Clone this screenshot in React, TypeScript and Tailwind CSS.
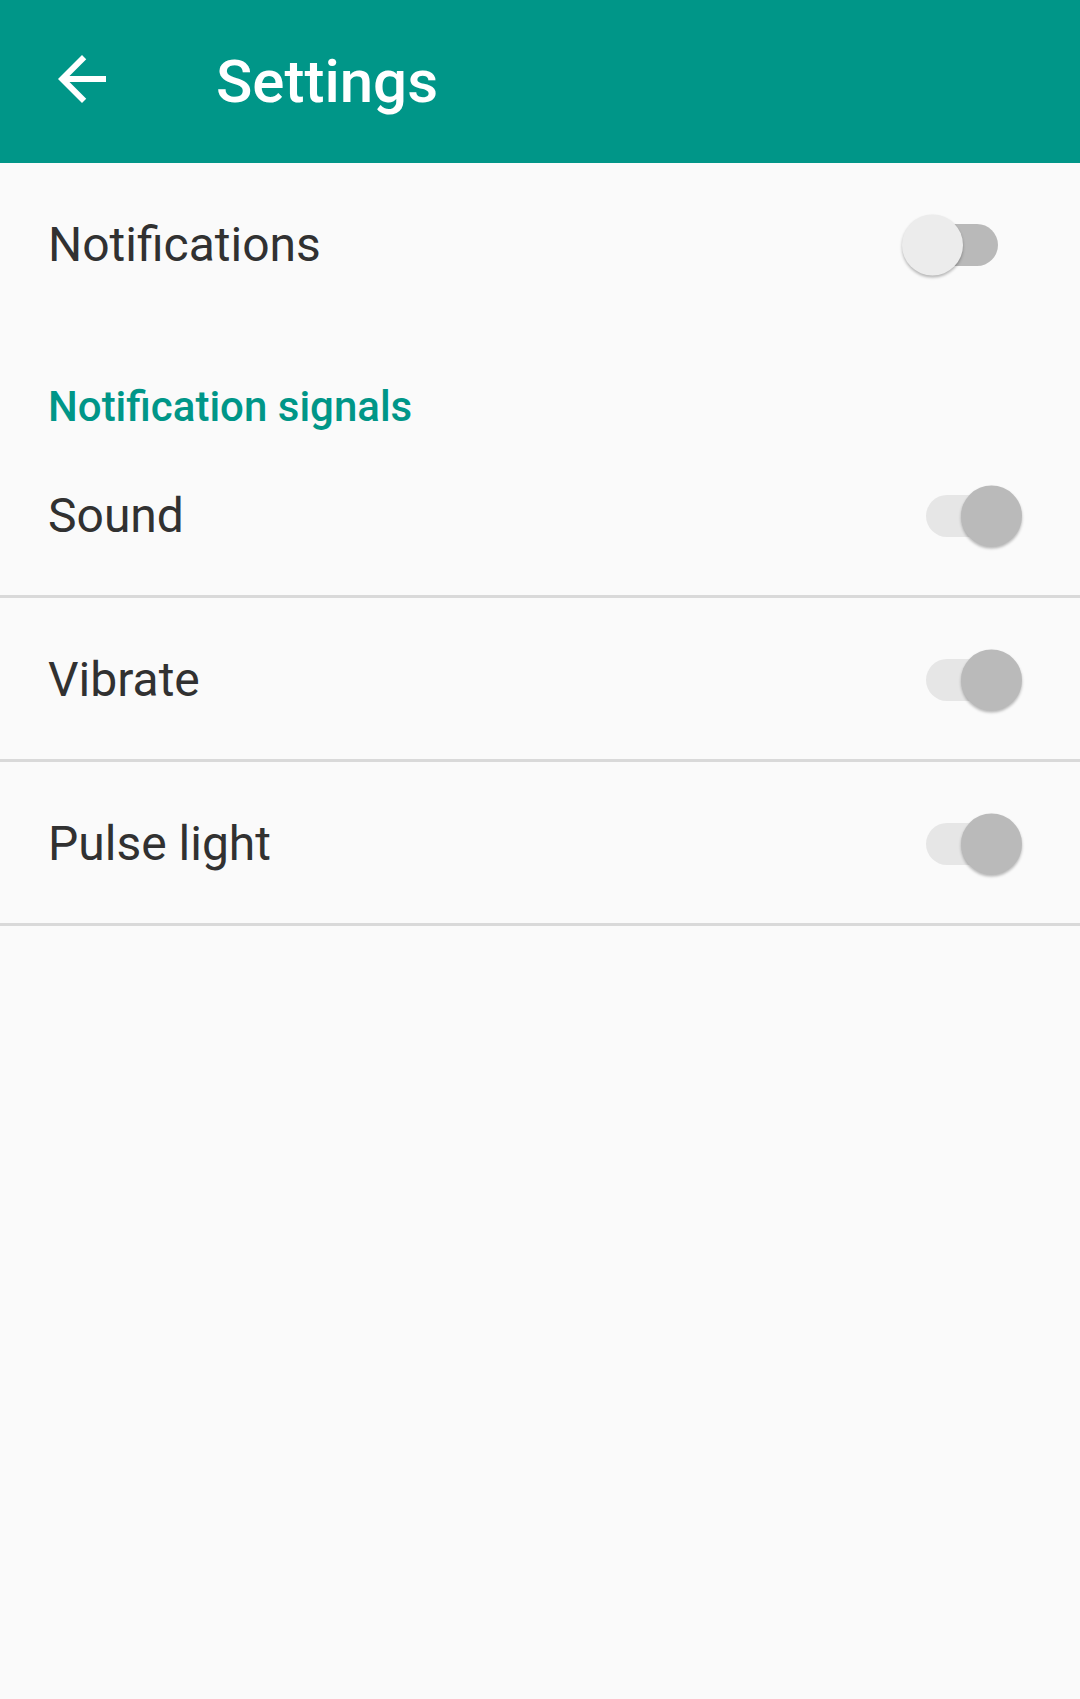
import { useState } from "react";

type Pref = { key: string; label: string; on: boolean };

const signals: Pref[] = [
  { key: "sound", label: "Sound", on: true },
  { key: "vibrate", label: "Vibrate", on: true },
  { key: "pulse", label: "Pulse light", on: true },
];

function Toggle({ on, disabled }: { on: boolean; disabled?: boolean }) {
  // disabled switches are greyed out, checked or not
  const track = disabled ? "bg-[#e6e6e6]" : on ? "bg-[#80cbc4]" : "bg-[#b9b9b9]";
  const thumb = disabled
    ? on
      ? "bg-[#bababa]"
      : "bg-[#ececec]"
    : on
      ? "bg-[#009688]"
      : "bg-[#ececec]";

  return (
    <div className="relative w-[72px] h-[42px] mr-[82px]">
      <div className={`w-full h-full rounded-full ${track}`} />
      <div
        className={`absolute top-1/2 -translate-y-1/2 w-[61px] h-[61px] rounded-full shadow-[0_2px_3px_rgba(0,0,0,0.28)] ${thumb} ${
          on ? "left-[35px]" : "-left-[24px]"
        }`}
      />
    </div>
  );
}

export default function App() {
  const [notify] = useState(false);

  return (
    <div className="min-h-screen bg-[#fafafa] font-['Roboto',sans-serif]">
      <header className="h-[163px] bg-[#009688] flex items-center text-white">
        <button aria-label="Back" className="self-start mt-[43px] ml-[46px] w-[72px] h-[72px]">
          <svg viewBox="0 0 24 24" className="w-[72px] h-[72px]" fill="currentColor">
            <path d="M20 11H7.83l5.59-5.59L12 4l-8 8 8 8 1.41-1.41L7.83 13H20v-2z" />
          </svg>
        </button>
        <h1 className="ml-[98px] text-[60px] leading-[70px] font-medium">Settings</h1>
      </header>

      <div className="h-[164px] flex items-center justify-between pl-[48px]">
        <span className="text-[48px] leading-[56px] text-[#313131]">Notifications</span>
        <Toggle on={notify} />
      </div>

      <div className="h-[107px] pl-[48px] pt-[55px]">
        <span className="text-[42px] leading-[49px] font-medium text-[#009688]">Notification signals</span>
      </div>

      {signals.map((s) => (
        <div
          key={s.key}
          className="h-[164px] flex items-center justify-between pl-[48px] pt-[3px] border-b-[3px] border-[#d9d9d9]"
        >
          <span className="text-[48px] leading-[56px] text-[#313131]">{s.label}</span>
          <Toggle on={s.on} disabled={!notify} />
        </div>
      ))}
    </div>
  );
}
